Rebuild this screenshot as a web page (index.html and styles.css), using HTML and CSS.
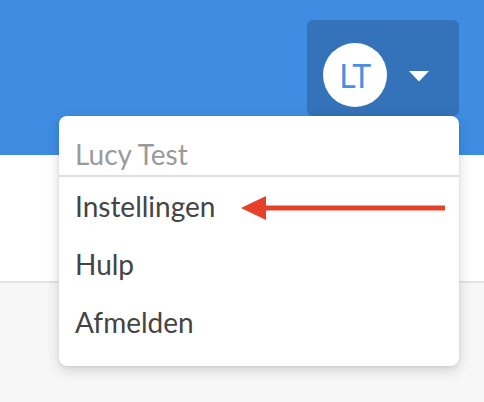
FILE: index.html
```html
<!DOCTYPE html>
<html lang="nl">
<head>
<meta charset="utf-8">
<title>Gebruikersmenu</title>
<link rel="stylesheet" href="styles.css">
</head>
<body>
<div class="page">
  <header class="topbar">
    <button class="user-btn" type="button">
      <span class="avatar">LT</span>
      <svg class="caret" width="20" height="11" viewBox="0 0 20 11"><path d="M0 0H20L10 10.5Z" fill="#fff"/></svg>
    </button>
  </header>
  <section class="band"></section>
  <main class="content"></main>

  <div class="menu">
    <div class="menu-head">Lucy Test</div>
    <ul class="menu-list">
      <li class="menu-item">Instellingen</li>
      <li class="menu-item">Hulp</li>
      <li class="menu-item">Afmelden</li>
    </ul>
  </div>

  <svg class="pointer" width="210" height="26" viewBox="0 0 210 26">
    <path d="M0 13L25 1V10.5H204V15.5H25V25Z" fill="#e8412a"/>
  </svg>
</div>
</body>
</html>
```

FILE: styles.css
```css
* { box-sizing: border-box; }
html, body { margin: 0; padding: 0; }
body {
  font-family: Lato, "Open Sans", "Liberation Sans", sans-serif;
  background: #f7f7f7;
  width: 484px;
  height: 402px;
  overflow: hidden;
}
.page {
  position: relative;
  height: 402px;
  display: flex;
  flex-direction: column;
}
.topbar {
  height: 155px;
  background: #3e8de3;
  display: flex;
  justify-content: flex-end;
  align-items: flex-start;
  padding: 20px 25px 0 0;
}
.user-btn {
  width: 152px;
  height: 96px;
  border: 0;
  border-radius: 6px;
  background: #3472b9;
  display: flex;
  align-items: flex-start;
  padding: 23px 0 0 16px;
  gap: 22px;
}
.avatar {
  width: 64px;
  height: 64px;
  border-radius: 50%;
  background: #fff;
  color: #4a90e2;
  font-family: Lato, sans-serif;
  font-weight: 400;
  font-size: 32px;
  display: flex;
  align-items: center;
  justify-content: center;
  letter-spacing: -0.5px;
}
.caret { margin-top: 28px; }
.band {
  height: 128px;
  background: #fff;
  border-bottom: 2px solid #e3e3e3;
}
.content { flex: 1; }
.menu {
  position: absolute;
  top: 116px;
  left: 59px;
  width: 400px;
  height: 250px;
  background: #fff;
  border-radius: 8px;
  box-shadow: 0 4px 14px rgba(0,0,0,0.16), 0 1px 3px rgba(0,0,0,0.08);
  padding-top: 20px;
}
.menu-head {
  font-size: 28px;
  line-height: 36px;
  color: #9a9a9a;
  padding: 0 16px 3px;
  border-bottom: 2px solid #dedede;
}
.menu-list {
  list-style: none;
  margin: 0;
  padding: 0;
}
.menu-item {
  font-size: 28px;
  line-height: 58px;
  color: #444;
  padding: 0 16px;
}
.pointer {
  position: absolute;
  left: 241px;
  top: 195px;
}
```
